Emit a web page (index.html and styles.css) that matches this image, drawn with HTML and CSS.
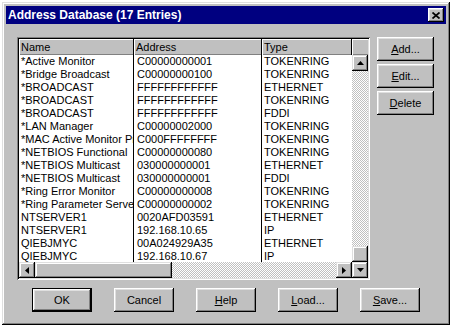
FILE: index.html
```html
<!DOCTYPE html>
<html lang="en">
<head>
    <meta charset="UTF-8">
    <title>Address Database</title>
    <link rel="stylesheet" href="styles.css">
</head>
<body>
    <div class="window">
        <div class="titlebar">
            <span class="title">Address Database (17 Entries)</span>
            <button class="close-btn" type="button">
                <svg width="8" height="7" viewBox="0 0 8 7"><path d="M0.5 0.5L7.5 6.5M7.5 0.5L0.5 6.5" stroke="#000" stroke-width="1.7"/></svg>
            </button>
        </div>
        <div class="content">
            <div class="listbox">
                <div class="list-header">
                    <div class="hcell col-name">Name</div>
                    <div class="hcell col-addr">Address</div>
                    <div class="hcell col-type">Type</div>
                    <div class="hfill"></div>
                </div>
                <div class="list-body">
                    <div class="row"><div class="cell col-name">*Active Monitor</div><div class="cell col-addr">C00000000001</div><div class="cell col-type">TOKENRING</div></div>
                    <div class="row"><div class="cell col-name">*Bridge Broadcast</div><div class="cell col-addr">C00000000100</div><div class="cell col-type">TOKENRING</div></div>
                    <div class="row"><div class="cell col-name">*BROADCAST</div><div class="cell col-addr">FFFFFFFFFFFF</div><div class="cell col-type">ETHERNET</div></div>
                    <div class="row"><div class="cell col-name">*BROADCAST</div><div class="cell col-addr">FFFFFFFFFFFF</div><div class="cell col-type">TOKENRING</div></div>
                    <div class="row"><div class="cell col-name">*BROADCAST</div><div class="cell col-addr">FFFFFFFFFFFF</div><div class="cell col-type">FDDI</div></div>
                    <div class="row"><div class="cell col-name">*LAN Manager</div><div class="cell col-addr">C00000002000</div><div class="cell col-type">TOKENRING</div></div>
                    <div class="row"><div class="cell col-name">*MAC Active Monitor Present</div><div class="cell col-addr">C000FFFFFFFF</div><div class="cell col-type">TOKENRING</div></div>
                    <div class="row"><div class="cell col-name">*NETBIOS Functional</div><div class="cell col-addr">C00000000080</div><div class="cell col-type">TOKENRING</div></div>
                    <div class="row"><div class="cell col-name">*NETBIOS Multicast</div><div class="cell col-addr">030000000001</div><div class="cell col-type">ETHERNET</div></div>
                    <div class="row"><div class="cell col-name">*NETBIOS Multicast</div><div class="cell col-addr">030000000001</div><div class="cell col-type">FDDI</div></div>
                    <div class="row"><div class="cell col-name">*Ring Error Monitor</div><div class="cell col-addr">C00000000008</div><div class="cell col-type">TOKENRING</div></div>
                    <div class="row"><div class="cell col-name">*Ring Parameter Server</div><div class="cell col-addr">C00000000002</div><div class="cell col-type">TOKENRING</div></div>
                    <div class="row"><div class="cell col-name">NTSERVER1</div><div class="cell col-addr">0020AFD03591</div><div class="cell col-type">ETHERNET</div></div>
                    <div class="row"><div class="cell col-name">NTSERVER1</div><div class="cell col-addr">192.168.10.65</div><div class="cell col-type">IP</div></div>
                    <div class="row"><div class="cell col-name">QIEBJMYC</div><div class="cell col-addr">00A024929A35</div><div class="cell col-type">ETHERNET</div></div>
                    <div class="row"><div class="cell col-name">QIEBJMYC</div><div class="cell col-addr">192.168.10.67</div><div class="cell col-type">IP</div></div>
                </div>
                <div class="vscroll">
                    <div class="sbtn"><svg width="7" height="4" viewBox="0 0 7 4"><polygon points="3.5,0 7,4 0,4" fill="#000"/></svg></div>
                    <div class="track"></div>
                    <div class="sbtn"></div>
                    <div class="sbtn"><svg width="7" height="4" viewBox="0 0 7 4"><polygon points="0,0 7,0 3.5,4" fill="#000"/></svg></div>
                </div>
                <div class="hscroll">
                    <div class="sbtn"><svg width="4" height="7" viewBox="0 0 4 7"><polygon points="4,0 4,7 0,3.5" fill="#000"/></svg></div>
                    <div class="sbtn hthumb"></div>
                    <div class="track"></div>
                    <div class="sbtn"><svg width="4" height="7" viewBox="0 0 4 7"><polygon points="0,0 4,3.5 0,7" fill="#000"/></svg></div>
                </div>
            </div>
            <div class="side-buttons">
                <button class="btn side-btn" type="button"><u>A</u>dd...</button>
                <button class="btn side-btn" type="button"><u>E</u>dit...</button>
                <button class="btn side-btn" type="button"><u>D</u>elete</button>
            </div>
        </div>
        <div class="bottom-buttons">
            <button class="btn btn-default" type="button">OK</button>
            <button class="btn" type="button">Cancel</button>
            <button class="btn" type="button"><u>H</u>elp</button>
            <button class="btn" type="button"><u>L</u>oad...</button>
            <button class="btn" type="button"><u>S</u>ave...</button>
        </div>
    </div>
</body>
</html>
```

FILE: styles.css
```css
body {
    margin: 0;
    background: #fff;
    font-family: "Liberation Sans", Arial, sans-serif;
    font-size: 11px;
    color: #000;
}
.window {
    margin: 2px;
    width: 448px;
    height: 323px;
    box-sizing: border-box;
    padding: 4px;
    background: #c0c0c0;
    box-shadow: inset -1px -1px #000, inset 1px 1px #dfdfdf, inset -2px -2px #808080, inset 2px 2px #fff;
}
.titlebar {
    height: 18px;
    background: #000080;
    display: flex;
    align-items: center;
    justify-content: space-between;
    padding: 0 2px;
}
.title {
    color: #fff;
    font-weight: bold;
    font-size: 12px;
}
.close-btn {
    width: 16px;
    height: 14px;
    padding: 0;
    border: none;
    background: #c0c0c0;
    display: flex;
    align-items: center;
    justify-content: center;
    box-shadow: inset -1px -1px #000, inset 1px 1px #fff, inset -2px -2px #808080, inset 2px 2px #dfdfdf;
}
.content {
    display: flex;
    align-items: flex-start;
    padding: 13px 0 0 11px;
}
.listbox {
    width: 353px;
    height: 243px;
    box-sizing: border-box;
    padding: 2px;
    background: #fff;
    box-shadow: inset 1px 1px #808080, inset -1px -1px #fff, inset 2px 2px #000, inset -2px -2px #dfdfdf;
    display: grid;
    grid-template-columns: 333px 16px;
    grid-template-rows: 16px 207px 16px;
}
.list-header {
    grid-column: 1 / 3;
    display: flex;
    background: #c0c0c0;
}
.hcell {
    box-sizing: border-box;
    padding-left: 2px;
    line-height: 16px;
    border-right: 1px solid #000;
    box-shadow: inset 1px 1px #fff, inset 0 -1px #808080;
}
.hfill {
    flex: 1;
    box-shadow: inset 1px 1px #fff, inset 0 -1px #808080;
}
.col-name { width: 115px; }
.col-addr { width: 128px; }
.col-type { width: 90px; }
.list-body {
    overflow: hidden;
    background: #fff;
}
.row {
    display: flex;
    height: 13px;
}
.cell {
    box-sizing: border-box;
    padding-left: 2px;
    line-height: 13px;
    white-space: nowrap;
    overflow: hidden;
}
.cell.col-name,
.cell.col-addr {
    border-right: 1px solid #000;
}
.cell.col-addr { padding-left: 3px; }
.vscroll {
    grid-column: 2;
    grid-row: 2 / 4;
    display: flex;
    flex-direction: column;
}
.hscroll {
    grid-column: 1;
    grid-row: 3;
    display: flex;
}
.sbtn {
    width: 16px;
    height: 16px;
    flex: none;
    background: #c0c0c0;
    display: flex;
    align-items: center;
    justify-content: center;
    box-shadow: inset -1px -1px #000, inset 1px 1px #dfdfdf, inset -2px -2px #808080, inset 2px 2px #fff;
}
.hthumb { width: 137px; }
.track {
    flex: 1;
    background-color: #fff;
    background-image: conic-gradient(#c0c0c0 25%, #fff 0 50%, #c0c0c0 0 75%, #fff 0);
    background-size: 2px 2px;
}
.side-buttons {
    display: flex;
    flex-direction: column;
    gap: 3px;
    margin-left: 7px;
}
.btn {
    font-family: "Liberation Sans", Arial, sans-serif;
    font-size: 11px;
    color: #000;
    background: #c0c0c0;
    border: none;
    padding: 0;
    width: 60px;
    height: 24px;
    box-shadow: inset -1px -1px #000, inset 1px 1px #fff, inset -2px -2px #808080, inset 2px 2px #dfdfdf;
}
.side-btn {
    width: 57px;
}
.btn-default {
    box-shadow: inset 0 0 0 1px #000, inset -2px -2px #000, inset 2px 2px #fff, inset -3px -3px #808080, inset 3px 3px #dfdfdf;
}
.bottom-buttons {
    display: flex;
    gap: 22px;
    padding: 8px 0 0 26px;
}
```
